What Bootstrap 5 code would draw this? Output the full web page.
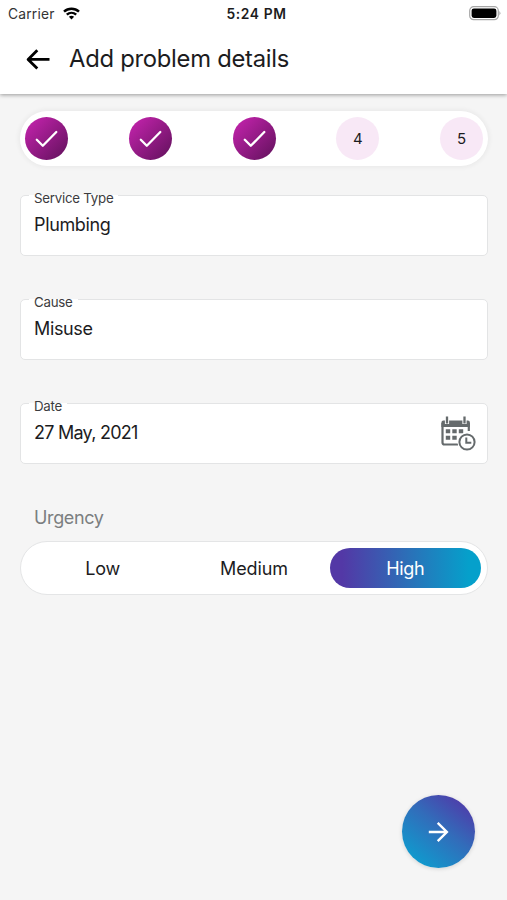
<!DOCTYPE html>
<html lang="en">
<head>
<meta charset="utf-8">
<meta name="viewport" content="width=device-width, initial-scale=1">
<title>Add problem details</title>
<link href="https://cdn.jsdelivr.net/npm/bootstrap@5.3.0/dist/css/bootstrap.min.css" rel="stylesheet">
<style>
body { background: #f5f5f5; font-family: Inter, "Liberation Sans", sans-serif; color: #1c1c1e; height: 900px; line-height: 1.2; overflow: hidden; }
.top { height: 94px; box-shadow: 0 1px 4px rgba(0,0,0,.38); }
.status { height: 27px; padding: 0 6px 0 8px; font-size: 13px; }
.status-side { width: 100px; }
.carrier { font-size: 13.8px; letter-spacing: .2px; color: #333; padding-top: 1px; }
.clock { font-size: 13.8px; letter-spacing: .6px; padding: 1px 0 0 4px; }
.title-row { height: 64px; padding-left: 26px; }
.title { font-size: 23.8px; letter-spacing: -.27px; margin-left: 19px; }
.content { padding: 17px 19px 0 20px; }
.steps { height: 55px; padding: 0 5px; margin-bottom: 29px; box-shadow: 0 0 4px 2px rgba(0,0,0,.045); }
.step { width: 43px; height: 43px; font-size: 15px; }
.step-done { background: linear-gradient(135deg, #b921a4 15%, #6a1363 90%); }
.step-todo { background: #f8e8f6; }
.field { height: 61px; border: 1px solid #e3e4e5; border-radius: 5px; padding: 0 11px 0 8px; margin-bottom: 43px; }
.field-label { font-size: 13.3px; letter-spacing: -.25px; line-height: 14px; height: 14px; margin-top: -5px; padding: 0 5px; color: #3c3c3e; background: linear-gradient(#f5f5f5 4px, #fff 4px); }
.field-value { font-size: 18px; letter-spacing: -.35px; line-height: 24px; margin-top: 8px; padding-left: 5px; }
.field-date { letter-spacing: -.75px; }
.urgency { font-size: 18px; letter-spacing: -.35px; line-height: 22px; color: #7b7e80; margin: 0 0 12px 14px; }
.segments { height: 54px; border: 1px solid #e4e5e6; padding: 6px; }
.segment { font-size: 18px; letter-spacing: -.1px; padding-top: 1px; }
.segment-on { background: linear-gradient(90deg, #5338a6 8%, #2b70b8 52%, #05a0cb 92%); letter-spacing: -.3px; }
.next { width: 73px; height: 73px; margin: 0 32px 32px 0; background: linear-gradient(38deg, #0f9bce 12%, #326cba 55%, #5138a8 92%); box-shadow: 0 1px 4px rgba(0,0,0,.14); }
</style>
</head>
<body class="d-flex flex-column">
<header class="top bg-white flex-shrink-0">
  <div class="status d-flex align-items-center justify-content-between">
    <div class="status-side d-flex align-items-center"><span class="carrier">Carrier</span>
      <svg class="ms-2" width="17" height="13" viewBox="0 0 17 13" fill="none" stroke="#000" stroke-width="2.4"><path d="M1 4.7C5.2.8 11.8.8 16 4.7M3.8 7.7c2.7-2.5 6.7-2.5 9.4 0"/><path d="M8.5 12.4 5.9 9.8q2.6-2 5.2 0z" fill="#000" stroke="none"/></svg>
    </div>
    <span class="clock fw-semibold">5:24 PM</span>
    <div class="status-side d-flex justify-content-end">
      <svg width="32" height="15" viewBox="0 0 32 15"><rect x=".7" y=".7" width="28.6" height="13" rx="4" fill="#fff" stroke="#a6a6a6" stroke-width="1.2"/><rect x="2.6" y="2.5" width="24.8" height="9.4" rx="2.3"/><path d="M30.4 5q2 2.2 0 4.4z" fill="#a6a6a6"/></svg>
    </div>
  </div>
  <div class="title-row d-flex align-items-center">
    <svg width="24" height="22" viewBox="0 0 24 22" fill="none" stroke="#000" stroke-width="2.8" stroke-linejoin="round"><path d="M23.5 11.4H2.5M11.3 2.2 2.1 11.4l9.2 9.2"/></svg>
    <h1 class="title fw-normal mb-0">Add problem details</h1>
  </div>
</header>
<main class="content">
  <div class="steps bg-white rounded-pill d-flex align-items-center justify-content-between">
    <div class="step step-done rounded-circle d-flex align-items-center justify-content-center"><svg width="23" height="19" viewBox="0 0 23 19" fill="none" stroke="#fff" stroke-width="2.3" stroke-linecap="round" stroke-linejoin="round"><path d="M1.8 10.7 7.8 16.8 21.3 3"/></svg></div>
    <div class="step step-done rounded-circle d-flex align-items-center justify-content-center"><svg width="23" height="19" viewBox="0 0 23 19" fill="none" stroke="#fff" stroke-width="2.3" stroke-linecap="round" stroke-linejoin="round"><path d="M1.8 10.7 7.8 16.8 21.3 3"/></svg></div>
    <div class="step step-done rounded-circle d-flex align-items-center justify-content-center"><svg width="23" height="19" viewBox="0 0 23 19" fill="none" stroke="#fff" stroke-width="2.3" stroke-linecap="round" stroke-linejoin="round"><path d="M1.8 10.7 7.8 16.8 21.3 3"/></svg></div>
    <div class="step step-todo rounded-circle d-flex align-items-center justify-content-center">4</div>
    <div class="step step-todo rounded-circle d-flex align-items-center justify-content-center">5</div>
  </div>
  <div class="field bg-white d-flex flex-column align-items-start">
    <div class="field-label">Service Type</div>
    <div class="field-value">Plumbing</div>
  </div>
  <div class="field bg-white d-flex flex-column align-items-start">
    <div class="field-label">Cause</div>
    <div class="field-value">Misuse</div>
  </div>
  <div class="field bg-white d-flex align-items-center justify-content-between">
    <div class="align-self-start d-flex flex-column align-items-start">
      <div class="field-label">Date</div>
      <div class="field-value field-date">27 May, 2021</div>
    </div>
    <svg width="36" height="36" viewBox="0 0 36 36" fill="none" stroke="#656a6c">
      <path d="M18 28.5H4.5a2 2 0 0 1-2-2V7M28.8 7v8" stroke-width="2.2"/>
      <path d="M1.4 11V6.500a2 2 0 0 1 2-2h24.500a2 2 0 0 1 2 2V11z" fill="#656a6c" stroke="none"/>
      <path d="M7 1v7M24.500 1v7" stroke="#fff" stroke-width="4.2"/>
      <path d="M7 .5v7M24.500 .5v7" stroke-width="2.3"/>
      <path d="M5.800 15.300h4.400M12.300 15.300h4.400M18.800 15.300h4.400M5.800 21.800h4.400M12.300 21.800h4.400" stroke-width="4"/>
      <circle cx="27" cy="26" r="9.600" fill="#fff" stroke="none"/>
      <circle cx="27" cy="26" r="7.600" stroke-width="2"/>
      <path d="M26.300 21.500v5.200h5" stroke-width="2"/>
    </svg>
  </div>
  <div class="urgency">Urgency</div>
  <div class="segments bg-white rounded-pill d-flex">
    <div class="segment flex-fill w-100 d-flex align-items-center justify-content-center">Low</div>
    <div class="segment flex-fill w-100 d-flex align-items-center justify-content-center">Medium</div>
    <div class="segment segment-on text-white rounded-pill flex-fill w-100 d-flex align-items-center justify-content-center">High</div>
  </div>
</main>
<div class="next rounded-circle mt-auto ms-auto flex-shrink-0 d-flex align-items-center justify-content-center">
  <svg width="22" height="22" viewBox="0 0 22 22" fill="none" stroke="#fff" stroke-width="2.4"><path d="M.8 11h18.500M9.700 1.800l9.200 9.200-9.200 9.200"/></svg>
</div>
<script src="https://cdn.jsdelivr.net/npm/bootstrap@5.3.0/dist/js/bootstrap.bundle.min.js"></script>
</body>
</html>
